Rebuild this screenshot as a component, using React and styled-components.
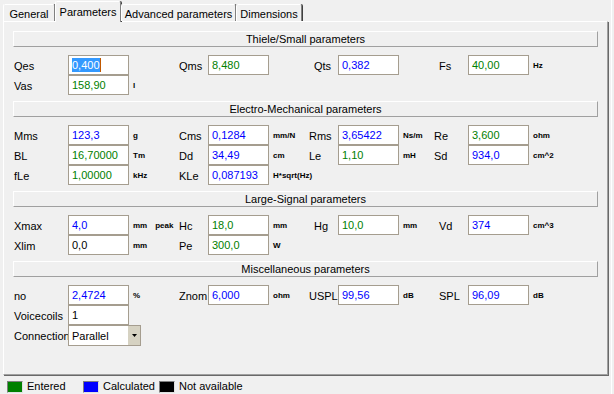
import React from 'react';
import styled, { createGlobalStyle } from "styled-components";

const GREEN = '#008000';
const BLUE = '#0000ff';
const BLACK = '#000000';

const sections = [
  {
    title: 'Thiele/Small parameters',
    rows: [
      [
        { label: 'Qes', value: '0,400', color: BLUE, selected: true },
        { label: 'Qms', value: '8,480', color: GREEN },
        { label: 'Qts', value: '0,382', color: BLUE, indent: 5 },
        { label: 'Fs', value: '40,00', color: GREEN, unit: 'Hz', indent: 5 },
      ],
      [{ label: 'Vas', value: '158,90', color: GREEN, unit: 'l' }],
    ],
  },
  {
    title: 'Electro-Mechanical parameters',
    rows: [
      [
        { label: 'Mms', value: '123,3', color: BLUE, unit: 'g' },
        { label: 'Cms', value: '0,1284', color: BLUE, unit: 'mm/N' },
        { label: 'Rms', value: '3,65422', color: BLUE, unit: 'Ns/m' },
        { label: 'Re', value: '3,600', color: GREEN, unit: 'ohm' },
      ],
      [
        { label: 'BL', value: '16,70000', color: GREEN, unit: 'Tm' },
        { label: 'Dd', value: '34,49', color: BLUE, unit: 'cm' },
        { label: 'Le', value: '1,10', color: GREEN, unit: 'mH' },
        { label: 'Sd', value: '934,0', color: BLUE, unit: 'cm^2' },
      ],
      [
        { label: 'fLe', value: '1,00000', color: GREEN, unit: 'kHz' },
        { label: 'KLe', value: '0,087193', color: BLUE, unit: 'H*sqrt(Hz)' },
      ],
    ],
  },
  {
    title: 'Large-Signal parameters',
    rows: [
      [
        { label: 'Xmax', value: '4,0', color: BLUE, unit: 'mm', extra: 'peak' },
        { label: 'Hc', value: '18,0', color: GREEN, unit: 'mm' },
        { label: 'Hg', value: '10,0', color: GREEN, unit: 'mm', indent: 5 },
        { label: 'Vd', value: '374', color: BLUE, unit: 'cm^3', indent: 5 },
      ],
      [
        { label: 'Xlim', value: '0,0', color: BLACK, unit: 'mm' },
        { label: 'Pe', value: '300,0', color: GREEN, unit: 'W' },
      ],
    ],
  },
];

const misc = [
  { label: 'no', value: '2,4724', color: BLUE, unit: '%' },
  { label: 'Znom', value: '6,000', color: BLUE, unit: 'ohm' },
  { label: 'USPL', value: '99,56', color: BLUE, unit: 'dB' },
  { label: 'SPL', value: '96,09', color: BLUE, unit: 'dB', indent: 5 },
];

function Field({ field }) {
  if (!field) {
    return (
      <>
        <span />
        <span />
        <span />
      </>
    );
  }
  return (
    <>
      <Label $indent={field.indent || 0}>{field.label}</Label>
      <Edit $color={field.color}>
        {field.selected ? <Selection>{field.value}</Selection> : field.value}
      </Edit>
      <Unit>
        {field.unit}
        {field.extra && <UnitExtra>{field.extra}</UnitExtra>}
      </Unit>
    </>
  );
}

function FieldRow({ fields }) {
  const cells = [0, 1, 2, 3].map((i) => fields[i]);
  return (
    <Row>
      {cells.map((f, i) => (
        <Field key={i} field={f} />
      ))}
    </Row>
  );
}

export default function App() {
  return (
    <Window>
      <GlobalStyle />
      <TabStrip>
        <Tab $width={52}>General</Tab>
        <Tab $width={66} $active>Parameters</Tab>
        <Tab $width={115}>Advanced parameters</Tab>
        <Tab $width={66}>Dimensions</Tab>
      </TabStrip>
      <Panel>
        {sections.map((s) => (
          <Section key={s.title}>
            <Header>{s.title}</Header>
            <Rows>
              {s.rows.map((r, i) => (
                <FieldRow key={i} fields={r} />
              ))}
            </Rows>
          </Section>
        ))}
        <Section>
          <Header>Miscellaneous parameters</Header>
          <Rows>
            <FieldRow fields={misc} />
            <FieldRow fields={[{ label: 'Voicecoils', value: '1', color: BLACK }]} />
            <Row $tall>
              <Label $indent={0}>Connection</Label>
              <Combo>
                <ComboText>Parallel</ComboText>
                <DropButton>
                  <svg width="5" height="3" viewBox="0 0 5 3">
                    <path d="M0 0H5L2.5 3Z" fill="#000" />
                  </svg>
                </DropButton>
              </Combo>
            </Row>
          </Rows>
        </Section>
      </Panel>
      <Legend>
        <LegendItem>
          <Swatch $color={GREEN} />
          Entered
        </LegendItem>
        <LegendItem>
          <Swatch $color={BLUE} />
          Calculated
        </LegendItem>
        <LegendItem>
          <Swatch $color={BLACK} />
          Not available
        </LegendItem>
      </Legend>
    </Window>
  );
}

const GlobalStyle = createGlobalStyle`
  body {
    margin: 0;
    background: #f0f0f0;
    font-family: "Liberation Sans", Arial, sans-serif;
  }
`;

const Window = styled.div`
  width: 611px;
  height: 394px;
  border-right: 1px solid #ffffff;
  background: #f0f0f0;
  font-size: 11px;
  color: #000;
  overflow: hidden;
`;

const TabStrip = styled.div`
  display: flex;
  align-items: flex-end;
  height: 21px;
  padding-left: 3px;
  position: relative;
  z-index: 2;
`;

const Tab = styled.div`
  box-sizing: border-box;
  width: ${(p) => p.$width}px;
  height: ${(p) => (p.$active ? 21 : 17)}px;
  margin-bottom: ${(p) => (p.$active ? -1 : 0)}px;
  padding-top: ${(p) => (p.$active ? 4 : 3)}px;
  line-height: 13px;
  text-align: center;
  white-space: nowrap;
  background: #f0f0f0;
  border-top: 1px solid #ffffff;
  border-left: 1px solid #ffffff;
  border-right: 1px solid #808080;
  box-shadow: 1px 0 0 #404040;
  border-radius: 2px 2px 0 0;
`;

const Panel = styled.div`
  box-sizing: border-box;
  width: 605px;
  height: 354px;
  margin-left: 3px;
  padding: 9px 0 0 9px;
  border-top: 1px solid #ffffff;
  border-left: 1px solid #ffffff;
  border-right: 1px solid #a0a0a0;
  border-bottom: 1px solid #a0a0a0;
  box-shadow: 1px 1px 0 #696969;
`;

const Section = styled.div`
  & + & {
    margin-top: 6px;
  }
`;

const Header = styled.div`
  box-sizing: border-box;
  width: 585px;
  height: 16px;
  line-height: 14px;
  text-align: center;
  border-top: 1px solid #ffffff;
  border-left: 1px solid #ffffff;
  border-right: 1px solid #a0a0a0;
  border-bottom: 1px solid #a0a0a0;
`;

const Rows = styled.div`
  margin-top: 8px;
`;

const Row = styled.div`
  display: grid;
  grid-template-columns: 55px 61px 49px 30px 61px 39px 30px 61px 34px 35px 61px 1fr;
  height: ${(p) => (p.$tall ? 21 : 20)}px;
`;

const Label = styled.div`
  padding: 5px 0 0 ${(p) => 1 + p.$indent}px;
  line-height: 13px;
  white-space: nowrap;
  font-size: 11px;
`;

const Edit = styled.div`
  box-sizing: border-box;
  height: 20px;
  padding: 2px 0 0 3px;
  line-height: 15px;
  background: #ffffff;
  border: 1px solid #a59d8f;
  color: ${(p) => p.$color};
  white-space: nowrap;
  overflow: hidden;
`;

const Selection = styled.span`
  background: #3399ff;
  color: #ffffff;
  border-right: 1px solid #c05800;
  padding: 1px 0;
`;

const Unit = styled.div`
  padding: 6px 0 0 4px;
  font-size: 8px;
  font-weight: bold;
  line-height: 10px;
  white-space: nowrap;
`;

const UnitExtra = styled.span`
  margin-left: 8px;
`;

const Combo = styled.div`
  box-sizing: border-box;
  grid-column: span 2;
  width: 73px;
  height: 21px;
  display: flex;
  background: #ffffff;
  border: 1px solid #a59d8f;
`;

const ComboText = styled.div`
  flex: 1;
  padding: 3px 0 0 3px;
  line-height: 14px;
  font-size: 11px;
`;

const DropButton = styled.div`
  width: 12px;
  display: flex;
  align-items: center;
  justify-content: center;
  background: #d6d2c2;
  border-left: 1px solid #ffffff;
`;

const Legend = styled.div`
  display: flex;
  align-items: center;
  margin-top: 5px;
  padding-left: 7px;
`;

const LegendItem = styled.div`
  display: flex;
  align-items: center;
  flex: none;
  width: 76px;
  white-space: nowrap;
  line-height: 13px;
`;

const Swatch = styled.span`
  box-sizing: border-box;
  flex: none;
  width: 16px;
  height: 12px;
  margin-right: 4px;
  background: ${(p) => p.$color};
  border-top: 1px solid #808080;
  border-left: 1px solid #808080;
  border-right: 1px solid #e0e0e0;
  border-bottom: 1px solid #e0e0e0;
`;
